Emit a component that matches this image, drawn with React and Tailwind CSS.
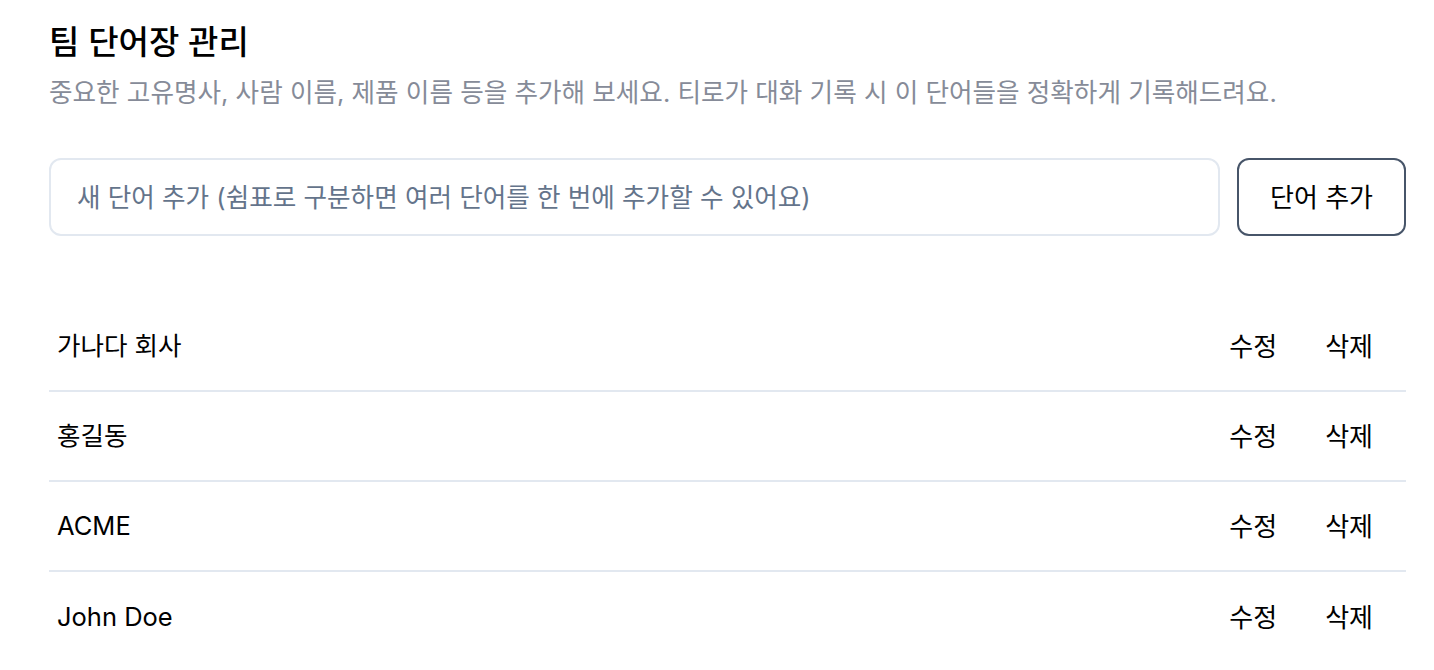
const words = ['가나다 회사', '홍길동', 'ACME', 'John Doe'];

const App = () => {
  return (
    <div
      className="min-h-screen bg-white text-black pl-[49px] pr-[28px] pt-6"
      style={{ fontFamily: "Inter, 'Noto Sans CJK KR', sans-serif" }}
    >
      <h1 className="text-[33px] leading-9 font-medium">팀 단어장 관리</h1>
      <p className="mt-[17px] text-[25.6px] leading-8 text-[#868b98]">
        중요한 고유명사, 사람 이름, 제품 이름 등을 추가해 보세요. 티로가 대화 기록 시 이 단어들을 정확하게 기록해드려요.
      </p>

      <div className="mt-[49px] flex gap-[17px]">
        <input
          placeholder="새 단어 추가 (쉼표로 구분하면 여러 단어를 한 번에 추가할 수 있어요)"
          className="flex-1 h-[78px] rounded-xl border-2 border-[#e2e8f0] px-[26px] text-[25.6px] outline-none placeholder:text-[#64748b]"
        />
        <button className="w-[169px] h-[78px] rounded-xl border-2 border-[#475569] text-[26px]">
          단어 추가
        </button>
      </div>

      <ul className="mt-[66px]">
        {words.map((w, i) => (
          <li
            key={i}
            className="h-[90px] flex items-center justify-between pl-2 pr-[33px] border-b-2 border-[#e2e8f0] last:border-b-0"
          >
            <span className="text-[25.5px]">{w}</span>
            <div className="flex gap-[48px] text-[26px]">
              <button>수정</button>
              <button>삭제</button>
            </div>
          </li>
        ))}
      </ul>
    </div>
  );
};

export default App;
